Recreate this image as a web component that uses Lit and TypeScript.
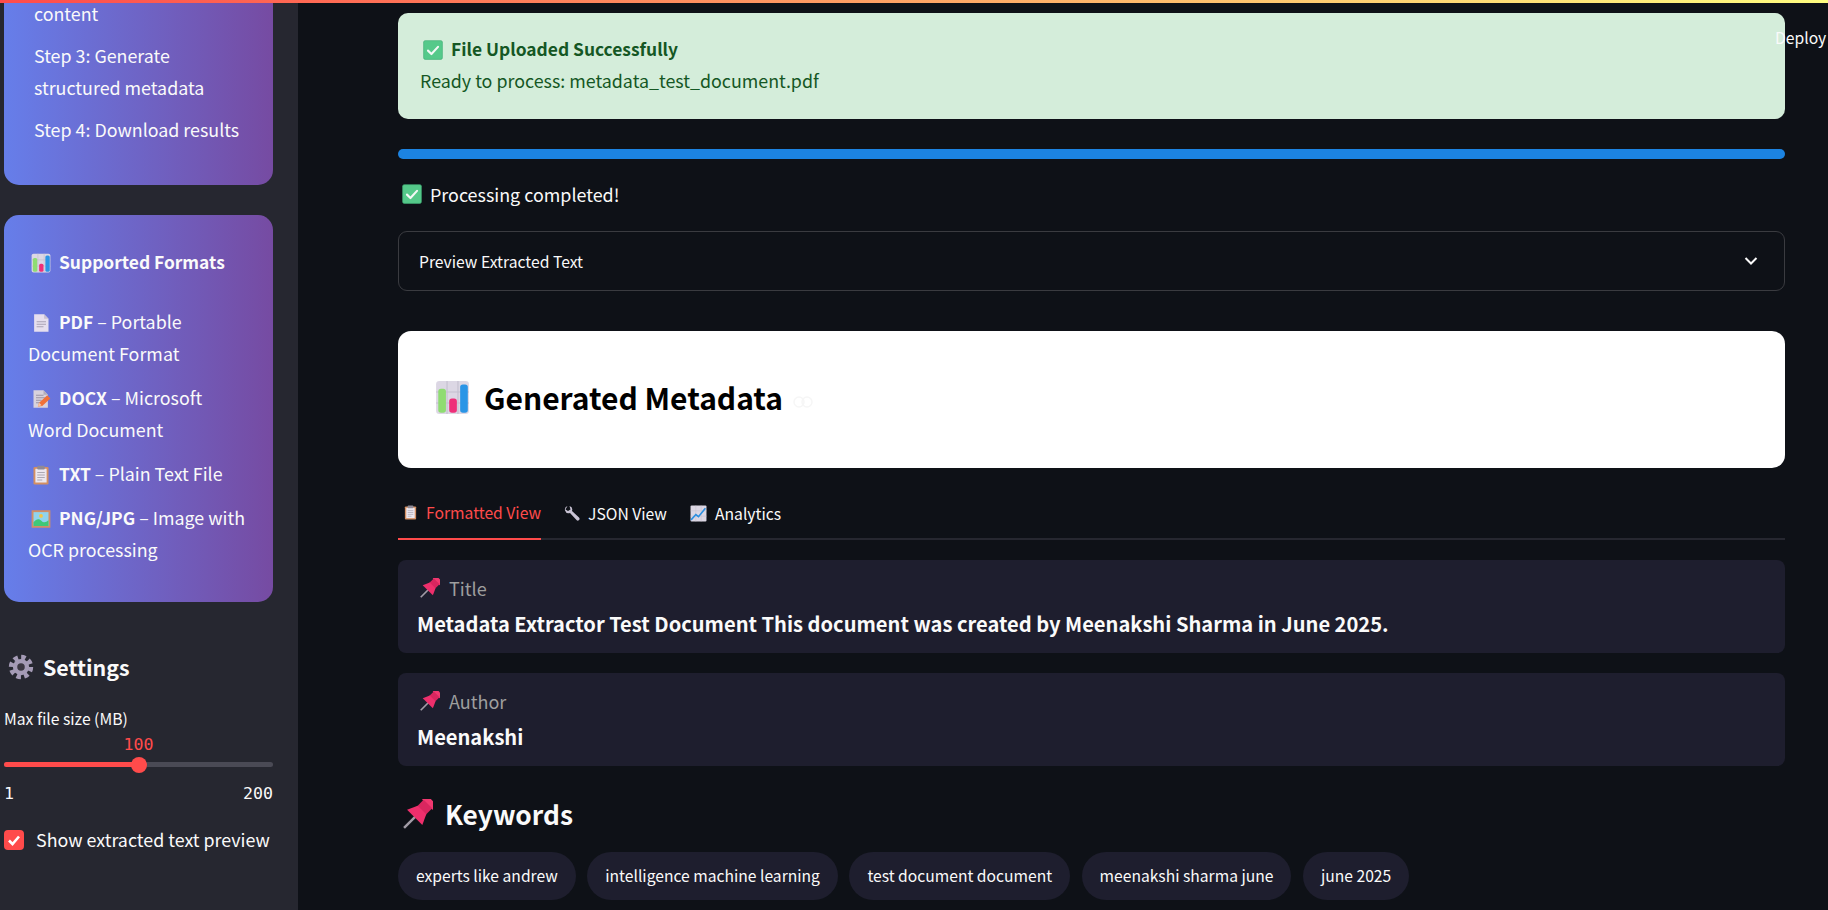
import { LitElement, html, css, svg } from 'lit';
import { customElement } from 'lit/decorators.js';

// emoji drawn by hand, no emoji font in the sandbox
const icons: Record<string, unknown> = {
  chart: svg`
    <rect x="1" y="1" width="30" height="30" rx="3" fill="#dcd7e4"/>
    <path d="M11 1v30M21 1v30M1 11h30M1 21h30" stroke="#c4bfce" stroke-width="1"/>
    <rect x="3" y="8" width="7" height="22" rx="2.5" fill="#8fdc72"/>
    <rect x="13" y="17" width="7" height="13" rx="2.5" fill="#ee2f79"/>
    <rect x="23" y="4" width="7" height="26" rx="2.5" fill="#2a95e6"/>`,
  check: svg`
    <rect x="1" y="1" width="30" height="30" rx="2.5" fill="#55c98a"/>
    <rect x="1" y="1" width="30" height="30" rx="2.5" fill="none" stroke="#3fae73" stroke-width="1"/>
    <path d="M8 17l5.5 5.5L24 11" fill="none" stroke="#f4f8f6" stroke-width="3.4" stroke-linecap="round" stroke-linejoin="round"/>`,
  page: svg`
    <path d="M5 2h16l7 7v21H5z" fill="#e6dfee"/>
    <path d="M21 2l7 7h-7z" fill="#c8c0d2"/>
    <path d="M9 14h15M9 18h15M9 22h11" stroke="#a9a2b4" stroke-width="1.6"/>`,
  memo: svg`
    <path d="M4 2h16l7 7v21H4z" fill="#d8d2dc"/>
    <path d="M20 2l7 7h-7z" fill="#b4adb9"/>
    <path d="M8 10h12M8 14h14M8 18h9M8 22h6" stroke="#9c95a4" stroke-width="1.6"/>
    <path d="M11 28l2-6 13-12 5 5-13 12z" fill="#f0713a"/>
    <path d="M11 28l2-6 4 4z" fill="#f7c9a2"/>`,
  clipboard: svg`
    <rect x="4" y="3" width="24" height="28" rx="2" fill="#d48f62"/>
    <rect x="7" y="6" width="18" height="22" fill="#ece7ef"/>
    <rect x="10" y="1" width="12" height="6" rx="1.5" fill="#8f8a96"/>
    <path d="M10 12h12M10 16h12M10 20h12M10 24h8" stroke="#a9a4b0" stroke-width="1.5"/>`,
  picture: svg`
    <rect x="1" y="2" width="30" height="28" fill="#d18f66"/>
    <rect x="4" y="5" width="24" height="22" fill="#90d4ee"/>
    <circle cx="16" cy="11" r="3" fill="#f6c543"/>
    <path d="M4 21c5-6 9-6 13-2s7 2 11-1v9H4z" fill="#3fc878"/>`,
  gear: svg`
    <circle cx="16" cy="16" r="12" fill="none" stroke="#a59bb6" stroke-width="6" stroke-dasharray="5.4 4"/>
    <circle cx="16" cy="16" r="10" fill="#a59bb6"/>
    <circle cx="16" cy="16" r="4.6" fill="#3b3742"/>`,
  wrench: svg`
    <path d="M7 2a8 8 0 0 0-5 9 8 8 0 0 0 10 5l13 14a3.500 3.500 0 0 0 5-5L16 12a8 8 0 0 0-5-10l2 7-5 3-5-3z" fill="#c8c3d4"/>`,
  trend: svg`
    <rect x="1" y="1" width="30" height="30" rx="2" fill="#dcd7e4"/>
    <path d="M11 1v30M21 1v30M1 11h30M1 21h30" stroke="#c4bfce" stroke-width="1"/>
    <path d="M2 28l9-10 5 4L29 6" fill="none" stroke="#2b8fe0" stroke-width="3"/>`,
  pin: svg`
    <g transform="rotate(45 16 16)">
      <rect x="14.700" y="20" width="2.6" height="17" fill="#a19ca6"/>
      <rect x="7" y="-5" width="18" height="7" rx="2.5" fill="#f0386f"/>
      <rect x="9.5" y="1" width="13" height="12" fill="#d9265f"/>
      <path d="M9.500 10h13l5 11h-23z" fill="#ee2f6c"/>
    </g>`,
};

const emoji = (name: string, size = 20) => html`<svg class="emoji" viewBox="0 0 32 32" width=${size} height=${size}>${icons[name]}</svg>`;

const formats = [
  { icon: 'page', name: 'PDF', desc: 'Portable Document Format' },
  { icon: 'memo', name: 'DOCX', desc: 'Microsoft Word Document' },
  { icon: 'clipboard', name: 'TXT', desc: 'Plain Text File' },
  { icon: 'picture', name: 'PNG/JPG', desc: 'Image with OCR processing' },
];

const keywords = [
  'experts like andrew',
  'intelligence machine learning',
  'test document document',
  'meenakshi sharma june',
  'june 2025',
];

const fields = [
  { label: 'Title', value: 'Metadata Extractor Test Document This document was created by Meenakshi Sharma in June 2025.' },
  { label: 'Author', value: 'Meenakshi' },
];

@customElement('app-root')
export class AppRoot extends LitElement {
  static styles = css`
    :host {
      display: flex;
      position: relative;
      height: 910px;
      overflow: hidden;
      background: #0e1117;
      color: #fafafa;
      font-family: "Noto Sans CJK SC", "Noto Sans", sans-serif;
      font-size: 17.85px;
    }
    /* negative top margin so an inline icon does not grow its line */
    .emoji { flex: none; vertical-align: -4px; margin-top: -6px; }
    b { font-weight: 600; font-size: 17.4px; line-height: 1; }

    .decoration {
      position: absolute;
      top: 0; left: 0; right: 0;
      height: 3px;
      background: linear-gradient(90deg, #ff4b4b, #fffd80);
      z-index: 2;
    }
    .deploy {
      position: absolute;
      top: 26px;
      left: 1775px;
      line-height: 24px;
      font-size: 15.7px;
      z-index: 2;
    }

    /* sidebar: anchored to the bottom, top card runs off the screen */
    .sidebar {
      flex: none;
      box-sizing: border-box;
      width: 298px;
      height: 910px;
      padding: 0 25px 60px 4px;
      background: #262730;
      display: flex;
      flex-direction: column;
      justify-content: flex-end;
      overflow: hidden;
    }
    .sidebar > * { flex: none; }
    .card {
      background: linear-gradient(90deg, #667eea, #764ba2);
      border-radius: 15px;
      padding: 30px 24px 37px;
      line-height: 32px;
    }
    .card p { margin: 0 0 12px; }
    .card p:last-child { margin-bottom: 0; }
    .steps { margin-bottom: 30px; padding: 30px 20px 40px 30px; }
    .card.steps p { margin-bottom: 10px; }
    .card.steps p:last-child { margin-bottom: 0; }
    .card .heading { margin-bottom: 28px; }
    .card .emoji { margin-inline: 3px 8px; }

    .settings {
      display: flex;
      align-items: center;
      gap: 9px;
      margin: 49px 0 0 4px;
      font-size: 21.4px;
      font-weight: 600;
      line-height: 32px;
    }
    .slider-label { margin-top: 24.5px; font-size: 15.7px; line-height: 22px; }
    .slider-value {
      margin-top: 5px;
      text-align: center;
      font: 16.6px/20px "DejaVu Sans Mono", monospace;
      color: #ff4b4b;
    }
    .track {
      position: relative;
      height: 5px;
      margin-top: 7.5px;
      border-radius: 3px;
      background: #4a4a55;
    }
    .track span {
      display: block;
      width: 50%;
      height: 100%;
      border-radius: 3px;
      background: #ff4b4b;
    }
    .track i {
      position: absolute;
      left: calc(50% - 8px);
      top: -5.5px;
      width: 16px;
      height: 16px;
      border-radius: 50%;
      background: #ff4b4b;
    }
    .range {
      display: flex;
      justify-content: space-between;
      margin-top: 16.5px;
      font: 16.6px/20px "DejaVu Sans Mono", monospace;
    }
    .checkbox { display: flex; align-items: center; gap: 12px; margin-top: 26.5px; line-height: 20px; white-space: nowrap; }
    .checkbox svg { flex: none; }
    .checkbox span { margin-top: -2px; }

    /* main column */
    .main {
      flex: 1;
      min-width: 0;
      box-sizing: border-box;
      height: 910px;
      padding: 13px 43px 0 100px;
      overflow: hidden;
    }
    .alert {
      box-sizing: border-box;
      height: 106px;
      padding: 19px 22px;
      border-radius: 10px;
      background: #d4edda;
      color: #155724;
      line-height: 32px;
    }
    .alert .emoji { margin-inline: 3px 8px; }
    .progress { height: 10px; margin-top: 30px; border-radius: 5px; background: #1c83e1; }
    .done { display: flex; align-items: center; gap: 8px; margin: 20px 0 0 4px; line-height: 30px; font-size: 17.9px; }
    .done .emoji, .field-label .emoji, .keywords .emoji, .settings .emoji, .hero .emoji, .tab .emoji { margin-top: 0; }
    .expander {
      box-sizing: border-box;
      display: flex;
      align-items: center;
      justify-content: space-between;
      height: 60px;
      margin-top: 22px;
      padding: 0 26px 0 20px;
      border: 1px solid #3a3b40;
      border-radius: 9px;
      font-size: 15.7px;
    }
    .hero {
      box-sizing: border-box;
      display: flex;
      align-items: center;
      gap: 14px;
      height: 137px;
      margin-top: 40px;
      padding: 0 37px 5px;
      border-radius: 13px;
      background: #fff;
      color: #000;
      font-size: 30px;
      font-weight: 600;
    }
    .hero .link { margin-left: -4px; margin-top: 10px; }

    .tabs {
      display: flex;
      gap: 23px;
      height: 72px;
      box-sizing: border-box;
      border-bottom: 2px solid #262730;
      font-size: 15.7px;
    }
    .tab {
      display: flex;
      align-items: center;
      gap: 8px;
      height: 72px;
      box-sizing: border-box;
      padding: 18px 0 0;
    }
    .tab.active {
      padding-left: 5px;
      color: #ff4b4b;
      border-bottom: 2px solid #ff4b4b;
    }

    .field {
      box-sizing: border-box;
      height: 93px;
      margin-top: 20px;
      padding: 14px 19px;
      border-radius: 8px;
      background: #1e1e2e;
    }
    .field-label { display: flex; align-items: center; gap: 9px; padding-left: 3px; color: #9e9e9e; font-size: 18px; line-height: 28px; }
    .field-value { margin-top: 8px; font-size: 20.1px; font-weight: 700; line-height: 28px; }

    .keywords {
      display: flex;
      align-items: center;
      gap: 12px;
      margin: 28px 0 0 5px;
      font-size: 26.3px;
      font-weight: 600;
      line-height: 40px;
    }
    .chips { display: flex; gap: 11.5px; margin-top: 18px; }
    .chip {
      height: 48px;
      padding: 0 18px;
      border-radius: 24px;
      background: #1e1e2e;
      font-size: 15.65px;
      line-height: 47px;
      white-space: nowrap;
    }
  `;

  render() {
    return html`
      <div class="decoration"></div>
      <div class="deploy">Deploy</div>

      <aside class="sidebar">
        <div class="card steps">
          <p>Step 1: Upload your document</p>
          <p>Step 2: Analyze document content</p>
          <p>Step 3: Generate structured metadata</p>
          <p>Step 4: Download results</p>
        </div>
        <div class="card">
          <p class="heading">${emoji('chart')}<b>Supported Formats</b></p>
          ${formats.map(
            (f) => html`<p>${emoji(f.icon)}<b>${f.name}</b> – ${f.desc}</p>`
          )}
        </div>
        <div class="settings">${emoji('gear', 26)}Settings</div>
        <div class="slider-label">Max file size (MB)</div>
        <div class="slider-value">100</div>
        <div class="track"><span></span><i></i></div>
        <div class="range"><span>1</span><span>200</span></div>
        <label class="checkbox">
          <svg width="20" height="20" viewBox="0 0 20 20">
            <rect width="20" height="20" rx="4" fill="#ff4b4b"/>
            <path d="M5 10.5l3.5 3.5L15 6.5" fill="none" stroke="#fff" stroke-width="2.6"/>
          </svg>
          <span>Show extracted text preview</span>
        </label>
      </aside>

      <main class="main">
        <div class="alert">
          <div>${emoji('check')}<b>File Uploaded Successfully</b></div>
          <div>Ready to process: metadata_test_document.pdf</div>
        </div>
        <div class="progress"></div>
        <div class="done">${emoji('check')}Processing completed!</div>
        <div class="expander">
          Preview Extracted Text
          <svg width="14" height="14" viewBox="0 0 14 14">
            <path d="M1.5 4l5.5 5.5L12.500 4" fill="none" stroke="#fafafa" stroke-width="2"/>
          </svg>
        </div>
        <div class="hero">
          ${emoji('chart', 35)}Generated Metadata
          <svg class="link" width="20" height="12" viewBox="0 0 20 12">
            <rect x="1" y="1" width="10" height="10" rx="5" fill="none" stroke="#f6f6f6" stroke-width="1.500"/>
            <rect x="9" y="1" width="10" height="10" rx="5" fill="none" stroke="#f6f6f6" stroke-width="1.500"/>
          </svg>
        </div>
        <div class="tabs">
          <div class="tab active">${emoji('clipboard', 15)}Formatted View</div>
          <div class="tab">${emoji('wrench', 16)}JSON View</div>
          <div class="tab">${emoji('trend', 17)}Analytics</div>
        </div>
        ${fields.map(
          (f) => html`
            <div class="field">
              <div class="field-label">${emoji('pin')}${f.label}</div>
              <div class="field-value">${f.value}</div>
            </div>
          `
        )}
        <div class="keywords">${emoji('pin', 30)}Keywords</div>
        <div class="chips">
          ${keywords.map((k) => html`<span class="chip">${k}</span>`)}
        </div>
      </main>
    `;
  }
}
